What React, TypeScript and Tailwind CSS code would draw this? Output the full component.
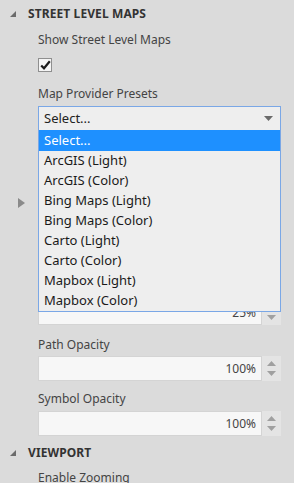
import React from "react";

const font = { fontFamily: '"Noto Sans", "Open Sans", sans-serif' };

function SectionHeader({ title }: { title: string }) {
  return (
    <div className="flex h-[28px] items-center">
      <svg width="28" height="28" viewBox="0 0 28 28" className="shrink-0">
        <polygon points="16,11 16,17 10,17" fill="#6b6b6b" />
      </svg>
      <span className="text-[12px] font-bold text-[#333333] tracking-[0.1px]">{title}</span>
    </div>
  );
}

function Label({ text, className = "" }: { text: string; className?: string }) {
  return (
    <div className={"h-[18px] pl-[38px] text-[12px] leading-[18px] text-[#444444] " + className}>{text}</div>
  );
}

function Spinner({ value, className = "" }: { value: string; className?: string }) {
  return (
    <div className={"ml-[38px] flex h-[25px] w-[243px] " + className}>
      <div className="flex flex-1 items-center justify-end border border-[#d4d4d4] bg-[#f7f7f7] pr-[5px] text-[12px] text-[#444444]">
        {value}
      </div>
      <div className="flex w-[19px] flex-col items-center justify-center gap-[5px] bg-[#e4e4e4]">
        <svg width="9" height="5" viewBox="0 0 9 5">
          <polygon points="0,5 9,5 4.5,0" fill="#a0a0a0" />
        </svg>
        <svg width="9" height="5" viewBox="0 0 9 5">
          <polygon points="0,0 9,0 4.5,5" fill="#a0a0a0" />
        </svg>
      </div>
    </div>
  );
}

const items = [
  "ArcGIS (Light)",
  "ArcGIS (Color)",
  "Bing Maps (Light)",
  "Bing Maps (Color)",
  "Carto (Light)",
  "Carto (Color)",
  "Mapbox (Light)",
  "Mapbox (Color)",
];

export default function App() {
  return (
    <div className="relative h-[483px] w-[294px] overflow-hidden bg-[#dbdbdb]" style={font}>
      <SectionHeader title="STREET LEVEL MAPS" />
      <Label text="Show Street Level Maps" className="mt-[3px]" />
      <div className="ml-[38px] mt-[9px] flex h-[14px] w-[14px] items-center justify-center border border-[#8f8f8f] bg-[#f4f4f4]">
        <svg width="11" height="10" viewBox="0 0 11 10">
          <path d="M1.2 5.4 L4 8.3 L9.8 1.3" stroke="#1a1a1a" strokeWidth="2.2" fill="none" strokeLinejoin="miter" />
        </svg>
      </div>
      <Label text="Map Provider Presets" className="mt-[13px]" />
      <div className="relative ml-[38px] mt-[3px] w-[243px]">
        <div className="flex h-[25px] items-center justify-between border border-[#7aa7e6] bg-[#eeeeee] pl-[5px] pr-[7px] text-[13px] text-[#222222]">
          <span>Select...</span>
          <svg width="9" height="5" viewBox="0 0 9 5">
            <polygon points="0,0 9,0 4.5,5" fill="#6a6a6a" />
          </svg>
        </div>
        <div className="absolute left-0 top-[24px] z-10 w-[243px] border-x border-b border-[#7aa7e6] bg-[#eeeeee]">
          <div className="flex h-[21px] items-center bg-[#1e90ff] pl-[5px] text-[13px] text-white">Select...</div>
          {items.map((it) => (
            <div key={it} className="flex h-[20px] items-center pl-[5px] text-[13px] text-[#1a1a1a]">
              {it}
            </div>
          ))}
        </div>
      </div>
      <div className="relative h-[169px]">
        <svg width="10" height="12" viewBox="0 0 10 12" className="absolute left-[17px] top-[66px]">
          <polygon points="1,1 8,6 1,11" fill="#8a8a8a" />
        </svg>
      </div>
      <Spinner value="25%" />
      <Label text="Path Opacity" className="mt-[11px]" />
      <Spinner value="100%" className="mt-[2px]" />
      <Label text="Symbol Opacity" className="mt-[9px]" />
      <Spinner value="100%" className="mt-[3px]" />
      <div className="mt-[3px]">
        <SectionHeader title="VIEWPORT" />
      </div>
      <Label text="Enable Zooming" className="mt-[2px]" />
    </div>
  );
}
